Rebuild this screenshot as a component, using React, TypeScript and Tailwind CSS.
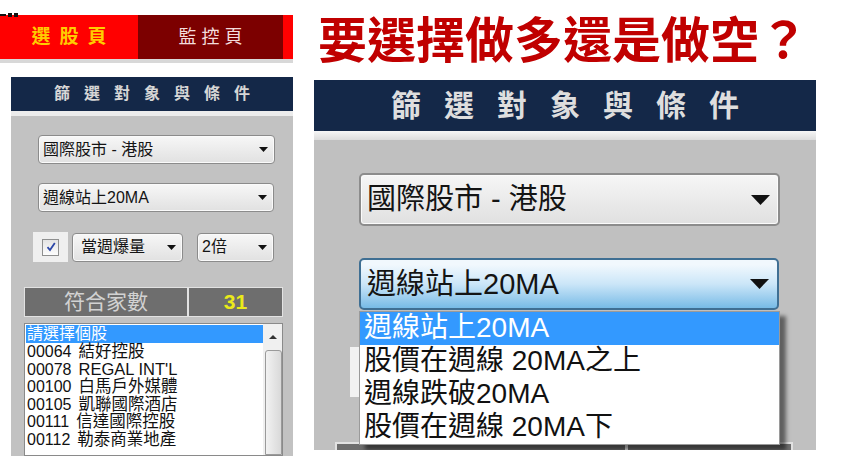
import React from "react";

const LIST_ITEMS = [
  ["00064", "結好控股"],
  ["00078", "REGAL INT'L"],
  ["00100", "白馬戶外媒體"],
  ["00105", "凱聯國際酒店"],
  ["00111", "信達國際控股"],
  ["00112", "勒泰商業地產"],
];

const MENU_ITEMS = ["股價在週線 20MA之上", "週線跌破20MA", "股價在週線 20MA下"];

function Arrow({ className }: { className: string }) {
  return (
    <svg viewBox="0 0 10 5" className={className} preserveAspectRatio="none">
      <path d="M0 0h10L5 5z" fill="#111" />
    </svg>
  );
}

function Check({ className }: { className: string }) {
  return (
    <div
      className={`flex shrink-0 items-center justify-center border border-[#8e8f8f] bg-linear-to-b from-[#e4e4e4] to-[#fdfdfd] ${className}`}
    >
      <svg viewBox="0 0 12 12" className="h-[80%] w-[80%]">
        <path d="M2.5 6.2 5 9l4.8-7" fill="none" stroke="#2c47a8" strokeWidth="1.8" />
      </svg>
    </div>
  );
}

function SmallCombo({ text, className }: { text: string; className: string }) {
  return (
    <div
      className={`flex h-[29px] shrink-0 items-center justify-between rounded-[4px] border border-[#8b8b8b] bg-linear-to-b from-[#f7f7f7] to-[#e1e1e1] pl-[4px] pr-[6px] text-[16px] leading-none text-[#141414] shadow-[inset_0_0_0_1px_#fafafa] ${className}`}
    >
      <span>{text}</span>
      <Arrow className="h-[5px] w-[9px]" />
    </div>
  );
}

function LeftPanel() {
  return (
    <div className="flex w-[293px] shrink-0 flex-col pt-[15px]">
      <div className="relative flex h-[44px] shrink-0">
        <div className="flex w-[138px] items-center justify-center bg-[#ff0000] pl-[9px] text-[19px] font-bold tracking-[9px] text-[#ffcc00]">
          選股頁
        </div>
        <div className="flex w-[145px] items-center justify-center bg-[#7c0000] pl-[5px] text-[18px] tracking-[5px] text-[#f3dcdc]">
          監控頁
        </div>
        <div className="flex-1 bg-[#ff0000]" />
        <div className="absolute -top-[2px] left-0 flex items-center gap-[2px]">
          <div className="h-[2px] w-[6px] bg-[#111]" />
          <div className="h-[4px] w-[4px] bg-[#111]" />
          <div className="h-[4px] w-[4px] bg-[#111]" />
        </div>
      </div>
      <div className="h-[4px] shrink-0 bg-[#d8d8d8]" />
      <div className="flex flex-1 flex-col pl-[11px] pt-[14px]">
        <div className="flex h-[34px] shrink-0 items-center justify-center bg-[#142848] pl-[14px] text-[16px] font-bold tracking-[14px] text-[#d6d6d6]">
          篩選對象與條件
        </div>
        <div className="h-[5px] shrink-0 bg-[#ececec]" />
        <div className="flex flex-1 flex-col bg-[#c2c2c2]">
          <SmallCombo text="國際股市 - 港股" className="ml-[27px] mt-[19px] w-[237px]" />
          <SmallCombo text="週線站上20MA" className="ml-[27px] mt-[19px] w-[236px]" />
          <div className="ml-[22px] mt-[20px] flex shrink-0 items-center">
            <div className="flex h-[30px] w-[35px] items-center justify-center bg-[#efefef]">
              <Check className="h-[17px] w-[17px]" />
            </div>
            <SmallCombo text="當週爆量" className="ml-[4px] w-[111px] pl-[8px]" />
            <SmallCombo text="2倍" className="ml-[14px] w-[77px]" />
          </div>
          <div className="ml-[13px] mt-[25px] flex h-[30px] w-[259px] shrink-0 border border-[#e2e2e2] bg-[#6e6e6e]">
            <div className="flex w-[162px] items-center justify-center text-[21px] text-[#d2d2d2]">
              符合家數
            </div>
            <div className="w-[2px] bg-[#e2e2e2]" />
            <div className="flex flex-1 items-center justify-center text-[21px] font-bold text-[#eaea1a]">
              31
            </div>
          </div>
          <div className="ml-[13px] mt-[6px] flex w-[259px] flex-1 border border-[#8a8a8a] bg-white">
            <div className="flex-1 pl-[1px] pt-[1px] text-[16px] leading-[17.6px] text-[#111]">
              <div className="h-[18px] bg-[#3399ff] pl-[1px] text-white">請選擇個股</div>
              {LIST_ITEMS.map(([code, name]) => (
                <div key={code} className="flex gap-[7px] pl-[1px]">
                  <span>{code}</span>
                  <span className="text-[16.5px]">{name}</span>
                </div>
              ))}
            </div>
            <div className="flex w-[19px] flex-col bg-[#f0f0f0]">
              <div className="flex h-[26px] items-center justify-center">
                <svg viewBox="0 0 8 4" className="h-[4px] w-[8px]">
                  <path d="M0 4h8L4 0z" fill="#333" />
                </svg>
              </div>
              <div className="ml-[2px] flex-1 rounded-t-[3px] border border-[#9a9a9a] bg-linear-to-r from-[#f2f2f2] to-[#d9d9d9]" />
            </div>
          </div>
        </div>
      </div>
    </div>
  );
}

function BigCombo({ text, focused, className }: { text: string; focused?: boolean; className: string }) {
  return (
    <div
      className={`flex shrink-0 items-center justify-between rounded-[5px] border-2 pl-[6px] pr-[8px] text-[29px] leading-none text-[#141414] ${
        focused
          ? "border-[#3f6f93] bg-linear-to-b from-[#f1f8fd] from-10% via-[#cbe6f8] via-50% to-[#77bbe6]"
          : "border-[#8c8c8c] bg-linear-to-b from-[#f6f6f6] to-[#e0e0e0] shadow-[inset_0_0_0_1px_#fbfbfb]"
      } ${className}`}
    >
      <span>{text}</span>
      <Arrow className="h-[10px] w-[19px]" />
    </div>
  );
}

function RightPanel() {
  return (
    <div className="ml-[21px] flex w-[502px] shrink-0 flex-col">
      <div className="h-[80px] shrink-0 pl-[4px] pt-[17px] text-[49px] font-bold leading-[48px] text-[#c00000]">
        要選擇做多還是做空？
      </div>
      <div className="flex h-[51px] shrink-0 items-center justify-center bg-[#142848] pl-[23px] text-[30px] font-bold tracking-[23px] text-[#dedede]">
        篩選對象與條件
      </div>
      <div className="h-[9px] shrink-0 bg-linear-to-b from-[#f6f6f6] to-[#dcdcdc]" />
      <div className="relative flex h-[310px] shrink-0 flex-col overflow-hidden bg-[#c0c0c0]">
        <BigCombo text="國際股市 - 港股" className="ml-[45px] mt-[33px] h-[53px] w-[421px]" />
        <BigCombo text="週線站上20MA" focused className="ml-[45px] mt-[32px] h-[52px] w-[420px]" />
        <div className="ml-[36px] mt-[37px] flex shrink-0 items-center">
          <div className="flex h-[50px] w-[62px] items-center justify-center bg-[#f2f2f2]">
            <Check className="h-[30px] w-[30px]" />
          </div>
          <div className="ml-[8px] h-[50px] w-[196px] rounded-[5px] border-2 border-[#8c8c8c] bg-[#e8e8e8]" />
        </div>
        <div className="ml-[21px] mt-[45px] flex h-[53px] w-[458px] shrink-0 border-2 border-[#e2e2e2] bg-[#6e6e6e]">
          <div className="w-[288px]" />
          <div className="w-[3px] bg-[#e2e2e2]" />
        </div>
        <div className="absolute left-[45px] top-[171px] flex h-[134px] w-[421px] flex-col border border-[#9a9a9a] bg-white text-[28px] leading-[32px] text-[#111] shadow-[6px_5px_4px_rgba(0,0,0,0.5)]">
          <div className="h-[33px] bg-[#3399ff] pl-[4px] text-white">週線站上20MA</div>
          {MENU_ITEMS.map((t) => (
            <div key={t} className="h-[33px] pl-[4px]">
              {t}
            </div>
          ))}
        </div>
      </div>
    </div>
  );
}

export default function App() {
  return (
    <div className="flex h-[456px] w-[847px] overflow-hidden bg-white font-[family-name:Liberation_Sans,Noto_Sans_CJK_TC,sans-serif]">
      <LeftPanel />
      <RightPanel />
    </div>
  );
}
